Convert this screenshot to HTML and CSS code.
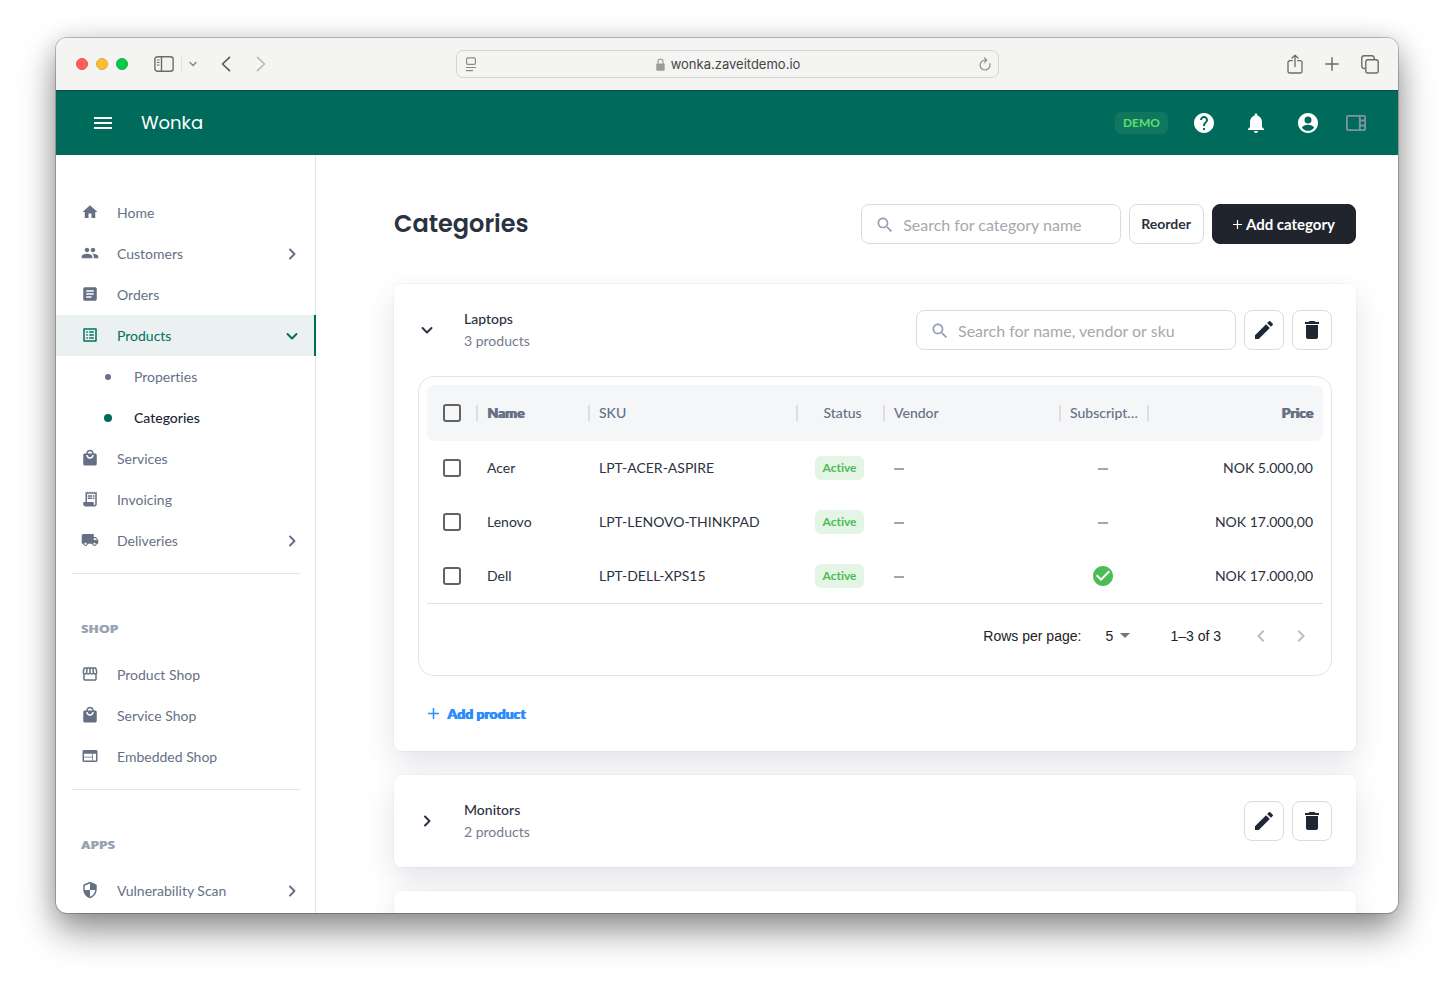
FILE: index.html
```html
<!DOCTYPE html>
<html lang="en">
<head>
<meta charset="utf-8">
<meta name="viewport" content="width=device-width, initial-scale=1">
<title>Wonka – Categories</title>
<link rel="stylesheet" href="styles.css">
</head>
<body>
<svg class="sprite" aria-hidden="true">
  <symbol id="i-mall" viewBox="0 0 24 24"><path d="M19 6h-2c0-2.760-2.240-5-5-5S7 3.240 7 6H5c-1.100 0-1.990.9-1.990 2L3 20c0 1.100.9 2 2 2h14c1.100 0 2-.9 2-2V8c0-1.100-.9-2-2-2zm-7-3c1.660 0 3 1.340 3 3H9c0-1.660 1.340-3 3-3zm0 10c-2.760 0-5-2.240-5-5h2c0 1.660 1.340 3 3 3s3-1.340 3-3h2c0 2.760-2.240 5-5 5z"/></symbol>
  <symbol id="i-right" viewBox="0 0 18 18"><path d="M7 4.500l4.500 4.500-4.500 4.500" fill="none" stroke="currentColor" stroke-width="2" stroke-linecap="round" stroke-linejoin="round"/></symbol>
  <symbol id="i-down" viewBox="0 0 18 18"><path d="M4.500 7l4.500 4.500 4.500-4.500" fill="none" stroke="currentColor" stroke-width="2" stroke-linecap="round" stroke-linejoin="round"/></symbol>
  <symbol id="i-search" viewBox="0 0 24 24"><path d="M15.500 14h-.79l-.28-.27C15.410 12.590 16 11.110 16 9.500 16 5.910 13.090 3 9.500 3S3 5.910 3 9.500 5.910 16 9.500 16c1.610 0 3.090-.59 4.230-1.570l.27.28v.79l5 4.990L20.490 19l-4.990-5zm-6 0C7.010 14 5 11.990 5 9.500S7.010 5 9.500 5 14 7.010 14 9.500 11.990 14 9.500 14z"/></symbol>
  <symbol id="i-edit" viewBox="0 0 24 24"><path d="M3 17.250V21h3.750L17.810 9.940l-3.750-3.750L3 17.250zM20.710 7.040c.39-.39.39-1.020 0-1.410l-2.340-2.340a.996.996 0 0 0-1.410 0l-1.830 1.830 3.750 3.750 1.830-1.830z"/></symbol>
  <symbol id="i-trash" viewBox="0 0 24 24"><path d="M6 19c0 1.100.9 2 2 2h8c1.100 0 2-.9 2-2V7H6v12zM19 4h-3.500l-1-1h-5l-1 1H5v2h14V4z"/></symbol>
</svg>

<div class="window">
  <header class="toolbar">
    <div class="toolbar-left">
      <span class="lights"><i class="light red"></i><i class="light amber"></i><i class="light green"></i></span>
      <button class="chrome-btn panel-btn" aria-label="Sidebar"><svg width="20" height="16" viewBox="0 0 20 16" fill="none" stroke="#6b6b69" stroke-width="1.400"><rect x=".9" y=".7" width="18.200" height="14.600" rx="2.500"/><path d="M7.500 1v14"/><path d="M3 4h2.500M3 6.500h2.500M3 9h2.500" stroke-width="1"/></svg></button>
      <span class="bar"></span>
      <button class="chrome-btn menu-btn" aria-label="Sidebar options"><svg width="8" height="6" viewBox="0 0 8 6" fill="none" stroke="#8a8a88" stroke-width="1.500" stroke-linecap="round"><path d="M1 1.500l3 3 3-3"/></svg></button>
      <button class="chrome-btn back-btn" aria-label="Back"><svg width="10" height="16" viewBox="0 0 10 16" fill="none" stroke="#5b5b59" stroke-width="1.700" stroke-linecap="round" stroke-linejoin="round"><path d="M8.500 1.300L1.500 8l7 6.700"/></svg></button>
      <button class="chrome-btn" aria-label="Forward"><svg width="10" height="16" viewBox="0 0 10 16" fill="none" stroke="#b9b9b7" stroke-width="1.700" stroke-linecap="round" stroke-linejoin="round"><path d="M1.500 1.300l7 6.700-7 6.700"/></svg></button>
    </div>
    <div class="address">
      <svg width="12" height="15" viewBox="0 0 12 15" fill="none" stroke="#8a8a88" stroke-width="1.200"><rect x="1.600" y=".8" width="8.800" height="6.600" rx="1.500"/><path d="M1 10.500h10M1 13.700h7"/></svg>
      <span class="host"><svg width="9" height="13" viewBox="0 0 9 13"><path d="M2 6V3.600a2.500 2.500 0 0 1 5 0V6" fill="none" stroke="#a5a5a3" stroke-width="1.300"/><rect x=".3" y="5.400" width="8.400" height="7.400" rx="1.200" fill="#9b9b99"/></svg>wonka.zaveitdemo.io</span>
      <button class="chrome-btn" aria-label="Reload"><svg width="12" height="15" viewBox="0 0 12 15" fill="none" stroke="#8f8f8d" stroke-width="1.200" stroke-linecap="round" stroke-linejoin="round"><path d="M10.700 6.700a4.900 4.900 0 1 1-4.700-3.500h1.500M5.500.8l2.300 2.400-2.300 2.400"/></svg></button>
    </div>
    <div class="toolbar-right">
      <button class="chrome-btn" aria-label="Share"><svg width="16" height="20" viewBox="0 0 16 20" fill="none" stroke="#6b6b69" stroke-width="1.300" stroke-linecap="round" stroke-linejoin="round"><path d="M5.300 6.700H2.700a1.700 1.700 0 0 0-1.700 1.700v8.900A1.700 1.700 0 0 0 2.700 19h10.600a1.700 1.700 0 0 0 1.700-1.700V8.400a1.700 1.700 0 0 0-1.700-1.700h-2.600M8 12.500V1.200M5 4l3-2.900L11 4"/></svg></button>
      <button class="chrome-btn" aria-label="New tab"><svg width="14" height="14" viewBox="0 0 14 14" fill="none" stroke="#6b6b69" stroke-width="1.500" stroke-linecap="round"><path d="M7 .8v12.400M.8 7h12.400"/></svg></button>
      <button class="chrome-btn" aria-label="Tabs"><svg width="18" height="19" viewBox="0 0 18 19" fill="none" stroke="#6b6b69" stroke-width="1.400"><path d="M4.500 13.500H3a2.200 2.200 0 0 1-2.200-2.200V3A2.200 2.200 0 0 1 3 .8h8A2.200 2.200 0 0 1 13.200 3v1.500"/><rect x="4.800" y="4.800" width="12.400" height="13.200" rx="2.200"/></svg></button>
    </div>
  </header>

  <div class="appbar">
    <button class="icon-btn" aria-label="Menu"><svg width="24" height="24" viewBox="0 0 24 24"><path d="M3 18h18v-2H3v2zm0-5h18v-2H3v2zm0-7v2h18V6H3z"/></svg></button>
    <a class="brand" href="#">Wonka</a>
    <span class="demo">DEMO</span>
    <div class="app-actions">
      <button class="icon-btn" aria-label="Help"><svg width="24" height="24" viewBox="0 0 24 24"><path d="M12 2C6.480 2 2 6.480 2 12s4.480 10 10 10 10-4.480 10-10S17.520 2 12 2zm1 17h-2v-2h2v2zm2.070-7.750l-.9.920C13.450 12.900 13 13.500 13 15h-2v-.5c0-1.100.45-2.100 1.170-2.830l1.240-1.260c.37-.36.59-.86.59-1.410 0-1.100-.9-2-2-2s-2 .9-2 2H8c0-2.210 1.790-4 4-4s4 1.790 4 4c0 .88-.36 1.680-.93 2.250z"/></svg></button>
      <button class="icon-btn" aria-label="Notifications"><svg width="24" height="24" viewBox="0 0 24 24"><path d="M12 22c1.100 0 2-.9 2-2h-4c0 1.100.89 2 2 2zm6-6v-5c0-3.070-1.640-5.640-4.500-6.320V4c0-.83-.67-1.500-1.500-1.500s-1.500.67-1.500 1.500v.68C7.630 5.360 6 7.920 6 11v5l-2 2v1h16v-1l-2-2z"/></svg></button>
      <button class="icon-btn" aria-label="Account"><svg width="24" height="24" viewBox="0 0 24 24"><path d="M12 2C6.480 2 2 6.480 2 12s4.480 10 10 10 10-4.480 10-10S17.520 2 12 2zm0 3.500a3.500 3.500 0 1 1 0 7 3.500 3.500 0 0 1 0-7zm0 14.300c-2.500 0-4.700-1.200-6-3.100.1-1.900 4-3 6-3s5.900 1.100 6 3c-1.300 1.900-3.500 3.100-6 3.100z"/></svg></button>
      <button class="icon-btn narrow" aria-label="Side panel"><svg width="20" height="16" viewBox="0 0 20 16" fill="none" stroke="#7f93a8" stroke-width="1.800"><rect x=".9" y=".9" width="18.200" height="14.200" rx="1"/><path d="M13.800 1v14M14 5.500h5M14 10.500h5"/></svg></button>
    </div>
  </div>

  <div class="body">
    <nav class="sidebar" aria-label="Main">
      <a class="item" href="#"><svg class="ico" viewBox="0 0 24 24"><path d="M10 20v-6h4v6h5v-8h3L12 3 2 12h3v8z"/></svg><span>Home</span></a>
      <a class="item" href="#"><svg class="ico" viewBox="0 0 24 24"><path d="M16 11c1.660 0 2.990-1.340 2.990-3S17.660 5 16 5c-1.660 0-3 1.340-3 3s1.340 3 3 3zm-8 0c1.660 0 2.990-1.340 2.990-3S9.660 5 8 5C6.340 5 5 6.340 5 8s1.340 3 3 3zm0 2c-2.330 0-7 1.170-7 3.500V19h14v-2.500c0-2.330-4.670-3.500-7-3.500zm8 0c-.29 0-.62.020-.97.050 1.160.84 1.970 1.970 1.970 3.450V19h6v-2.500c0-2.330-4.670-3.500-7-3.500z"/></svg><span>Customers</span><svg class="chev"><use href="#i-right"/></svg></a>
      <a class="item" href="#"><svg class="ico" viewBox="0 0 24 24"><path d="M19 3H5c-1.100 0-2 .9-2 2v14c0 1.100.9 2 2 2h14c1.100 0 2-.9 2-2V5c0-1.100-.9-2-2-2zm-5 14H7v-2h7v2zm3-4H7v-2h10v2zm0-4H7V7h10v2z"/></svg><span>Orders</span></a>
      <a class="item active" href="#"><svg class="ico" viewBox="0 0 24 24"><path d="M19 5v14H5V5h14m1.100-2H3.900c-.5 0-.9.4-.9.9v16.200c0 .4.4.9.9.9h16.200c.4 0 .9-.5.9-.9V3.900c0-.5-.5-.9-.9-.9zM11 7h6v2h-6V7zm0 4h6v2h-6v-2zm0 4h6v2h-6zM7 7h2v2H7zm0 4h2v2H7zm0 4h2v2H7z"/></svg><span>Products</span><svg class="chev"><use href="#i-down"/></svg></a>
      <a class="item sub" href="#"><i class="dot"></i><span>Properties</span></a>
      <a class="item sub current" href="#" aria-current="page"><i class="dot"></i><span>Categories</span></a>
      <a class="item" href="#"><svg class="ico"><use href="#i-mall"/></svg><span>Services</span></a>
      <a class="item" href="#"><svg class="ico" viewBox="0 0 24 24"><path d="M19.500 3.500L18 2l-1.500 1.500L15 2l-1.500 1.500L12 2l-1.500 1.500L9 2 7.500 3.500 6 2v14H3v3c0 1.660 1.340 3 3 3h12c1.660 0 3-1.340 3-3V2l-1.500 1.500zM19 19c0 .55-.45 1-1 1s-1-.45-1-1v-3H8V5h11v14zM9 7h6v2H9zM16 7h2v2h-2zM9 10h6v2H9zM16 10h2v2h-2z"/></svg><span>Invoicing</span></a>
      <a class="item" href="#"><svg class="ico" viewBox="0 0 24 24"><path d="M20 8h-3V4H3c-1.100 0-2 .9-2 2v11h2c0 1.660 1.340 3 3 3s3-1.340 3-3h6c0 1.660 1.340 3 3 3s3-1.340 3-3h2v-5l-3-4zM6 18.500c-.83 0-1.500-.67-1.500-1.500s.67-1.500 1.500-1.500 1.500.67 1.500 1.500-.67 1.500-1.500 1.500zm13.500-9l1.960 2.500H17V9.500h2.500zm-1.500 9c-.83 0-1.500-.67-1.500-1.500s.67-1.500 1.500-1.500 1.500.67 1.500 1.500-.67 1.500-1.500 1.500z"/></svg><span>Deliveries</span><svg class="chev"><use href="#i-right"/></svg></a>
      <h2 class="group">SHOP</h2>
      <a class="item" href="#"><svg class="ico" viewBox="0 0 24 24"><path d="M21.900 8.890l-1.050-4.370c-.22-.9-1-1.520-1.910-1.520H5.050c-.9 0-1.690.63-1.900 1.520L2.100 8.890c-.24 1.020-.02 2.060.62 2.880.08.110.19.190.28.290V19c0 1.100.9 2 2 2h14c1.100 0 2-.9 2-2v-6.940c.09-.09.2-.18.28-.28.64-.82.87-1.870.62-2.890zm-2.990-3.900l1.050 4.370c.1.420.01.84-.25 1.170-.14.180-.44.470-.94.470-.61 0-1.140-.49-1.210-1.140L16.980 5l1.930-.01zM13 5h1.960l.54 4.520c.05.390-.07.780-.33 1.070-.22.260-.54.410-.95.410-.67 0-1.220-.59-1.220-1.310V5zM8.490 9.520L9.040 5H11v4.690c0 .72-.55 1.310-1.290 1.310-.34 0-.65-.15-.89-.41-.25-.29-.37-.68-.33-1.070zm-4.450-.16L5.050 5h1.970l-.58 4.860c-.08.650-.6 1.140-1.210 1.140-.49 0-.8-.29-.93-.47-.27-.32-.36-.75-.26-1.170zM5 19v-6.030c.08.010.15.030.23.030.87 0 1.660-.36 2.240-.95.6.6 1.400.95 2.310.95.870 0 1.650-.36 2.230-.93.590.57 1.390.93 2.290.93.840 0 1.640-.35 2.240-.95.580.59 1.370.95 2.240.95.080 0 .15-.02.23-.03V19H5z"/></svg><span>Product Shop</span></a>
      <a class="item" href="#"><svg class="ico"><use href="#i-mall"/></svg><span>Service Shop</span></a>
      <a class="item" href="#"><svg class="ico" viewBox="0 0 24 24"><path d="M20 4H4c-1.100 0-1.990.9-1.990 2L2 18c0 1.100.9 2 2 2h16c1.100 0 2-.9 2-2V6c0-1.100-.9-2-2-2zm-5 14H4v-4h11v4zm0-5H4V9h11v4zm5 5h-4V9h4v9z"/></svg><span>Embedded Shop</span></a>
      <h2 class="group">APPS</h2>
      <a class="item" href="#"><svg class="ico" viewBox="0 0 24 24"><path d="M12 1L4.200 4.400C3.500 4.700 3 5.500 3 6.200V11c0 5.550 3.840 10.740 9 12 5.160-1.260 9-6.450 9-12V6.200c0-.7-.5-1.500-1.200-1.800L12 1zm0 10.990h7c-.53 4.120-3.280 7.790-7 8.940V12H5V6.300l7-3.110v8.800z"/></svg><span>Vulnerability Scan</span><svg class="chev"><use href="#i-right"/></svg></a>
    </nav>

    <main class="main">
      <div class="page-head">
        <h1>Categories</h1>
        <label class="search"><svg><use href="#i-search"/></svg><input type="text" aria-label="Search categories" placeholder="Search for category name"></label>
        <button class="btn">Reorder</button>
        <button class="btn dark"><svg width="9" height="9" viewBox="0 0 9 9" stroke="#fff" stroke-width="1.200"><path d="M4.500 0v9M0 4.500h9"/></svg>Add category</button>
      </div>

      <section class="card">
        <div class="card-head">
          <button class="toggle" aria-label="Collapse Laptops" aria-expanded="true"><svg><use href="#i-down"/></svg></button>
          <div class="titles"><h3>Laptops</h3><p>3 products</p></div>
          <label class="search wide"><svg><use href="#i-search"/></svg><input type="text" aria-label="Search products" placeholder="Search for name, vendor or sku"></label>
          <button class="square" aria-label="Edit"><svg><use href="#i-edit"/></svg></button>
          <button class="square" aria-label="Delete"><svg><use href="#i-trash"/></svg></button>
        </div>

        <div class="grid">
          <table>
            <colgroup><col class="c-check"><col class="c-name"><col class="c-sku"><col class="c-status"><col class="c-vendor"><col class="c-sub"><col></colgroup>
            <thead>
              <tr><th class="check"><input type="checkbox" aria-label="Select all"></th><th class="sep strong">Name</th><th class="sep">SKU</th><th class="sep center">Status</th><th class="sep">Vendor</th><th class="sep">Subscription</th><th class="sep strong right">Price</th></tr>
            </thead>
            <tbody>
              <tr><td class="check"><input type="checkbox" aria-label="Select Acer"></td><td>Acer</td><td>LPT-ACER-ASPIRE</td><td class="mid"><span class="badge">Active</span></td><td><i class="dash"></i></td><td class="mid"><i class="dash"></i></td><td class="right">NOK 5.000,00</td></tr>
              <tr><td class="check"><input type="checkbox" aria-label="Select Lenovo"></td><td>Lenovo</td><td>LPT-LENOVO-THINKPAD</td><td class="mid"><span class="badge">Active</span></td><td><i class="dash"></i></td><td class="mid"><i class="dash"></i></td><td class="right">NOK 17.000,00</td></tr>
              <tr><td class="check"><input type="checkbox" aria-label="Select Dell"></td><td>Dell</td><td>LPT-DELL-XPS15</td><td class="mid"><span class="badge">Active</span></td><td><i class="dash"></i></td><td class="mid"><svg class="tick" viewBox="0 0 24 24"><path d="M12 2C6.480 2 2 6.480 2 12s4.480 10 10 10 10-4.480 10-10S17.520 2 12 2zm-2 15l-5-5 1.410-1.410L10 14.170l7.590-7.590L19 8l-9 9z"/></svg></td><td class="right">NOK 17.000,00</td></tr>
            </tbody>
          </table>
          <div class="pager">
            <label for="rows">Rows per page:</label>
            <span class="rows"><select id="rows"><option>5</option><option>10</option><option>25</option></select><svg width="10" height="5" viewBox="0 0 10 5"><path d="M0 0h10L5 5z"/></svg></span>
            <span class="range">1–3 of 3</span>
            <button aria-label="Previous page"><svg viewBox="0 0 24 24"><path d="M15.410 7.410L14 6l-6 6 6 6 1.410-1.410L10.830 12z"/></svg></button>
            <button aria-label="Next page"><svg viewBox="0 0 24 24"><path d="M10 6L8.590 7.410 13.170 12l-4.580 4.590L10 18l6-6z"/></svg></button>
          </div>
        </div>

        <button class="add"><svg width="11" height="11" viewBox="0 0 11 11" stroke="#2a8bff" stroke-width="1.500"><path d="M5.500 0v11M0 5.500h11"/></svg>Add product</button>
      </section>

      <section class="card">
        <div class="card-head">
          <button class="toggle" aria-label="Expand Monitors" aria-expanded="false"><svg><use href="#i-right"/></svg></button>
          <div class="titles"><h3>Monitors</h3><p>2 products</p></div>
          <button class="square" aria-label="Edit"><svg><use href="#i-edit"/></svg></button>
          <button class="square" aria-label="Delete"><svg><use href="#i-trash"/></svg></button>
        </div>
      </section>

      <section class="card next"></section>
    </main>
  </div>
</div>
</body>
</html>
```

FILE: styles.css
```css
* { box-sizing: border-box; }
body {
  margin: 0;
  height: 100vh;
  padding: 38px 56px 74px;
  background: #fff;
  font: 14px/22px Lato, "Open Sans", sans-serif;
  font-variant-ligatures: none;
  color: #2b3240;
}
h1, h2, h3, p { margin: 0; }
a { color: inherit; text-decoration: none; }
button {
  font: inherit;
  color: inherit;
  padding: 0;
  border: 0;
  background: none;
}
svg { display: block; flex: none; }
svg:not([fill]) { fill: currentColor; }
.sprite { display: none; }

.window {
  height: 100%;
  display: flex;
  flex-direction: column;
  overflow: hidden;
  border-radius: 11px;
  background: #fff;
  box-shadow: 0 0 0 1px rgba(0, 0, 0, .22), 0 18px 36px rgba(0, 0, 0, .42), 0 2px 24px rgba(0, 0, 0, .14);
}

/* Browser toolbar */
.toolbar {
  flex: none;
  height: 53px;
  display: grid;
  grid-template-columns: 1fr minmax(0, 543px) 1fr;
  align-items: center;
  background: #f4f4f2;
  border-bottom: 1px solid #0a4b41;
}
.toolbar-left, .toolbar-right { display: flex; align-items: center; }
.toolbar-left { padding-left: 20px; }
.toolbar-right { justify-content: flex-end; gap: 22px; padding-right: 19px; }
.lights { display: flex; gap: 8px; }
.light { width: 12px; height: 12px; border-radius: 50%; border: 1px solid; }
.red { background: #ff5f57; border-color: #e9544d; }
.amber { background: #febc2e; border-color: #e3a93a; }
.green { background: #06c945; border-color: #0bb441; }
.panel-btn { margin-left: 26px; }
.bar { width: 1px; height: 18px; margin: 0 7px; background: #e2e2e0; }
.back-btn { margin: 0 25px 0 24px; }
.address {
  display: flex;
  align-items: center;
  justify-content: space-between;
  height: 28px;
  padding: 0 6px 0 8px;
  border: 1px solid #d3d3d1;
  border-radius: 7px;
}
.host {
  display: flex;
  align-items: center;
  gap: 6px;
  font: 13px/16px Inter, Roboto, sans-serif;
  color: #444;
}

/* Application bar */
.appbar {
  flex: none;
  display: flex;
  align-items: center;
  height: 64px;
  padding: 0 32px 0 33px;
  background: #006a5b;
  color: #fff;
}
.icon-btn { width: 28px; display: flex; justify-content: center; }
.icon-btn.narrow { width: 20px; }
.brand { margin-left: 24px; font: 18px/28px Poppins, Inter, sans-serif; }
.demo {
  margin: 0 22px 0 auto;
  padding: 0 8px;
  border-radius: 6px;
  background: #117660;
  color: #5be070;
  font-size: 12px;
  font-weight: 700;
}
.app-actions { display: flex; align-items: center; gap: 24px; }

/* Sidebar */
.body { flex: 1; min-height: 0; display: flex; overflow: hidden; }
.sidebar {
  flex: none;
  width: 260px;
  padding-top: 37px;
  border-right: 1px solid #e4e6ea;
  color: #667085;
}
.item {
  display: flex;
  align-items: center;
  gap: 18px;
  height: 41px;
  padding: 0 14px 0 25px;
}
.ico { width: 18px; height: 18px; margin-bottom: 2px; }
.chev { width: 18px; height: 18px; margin-left: auto; }
.active {
  margin-right: -1px;
  padding-right: 13px;
  border-right: 2px solid #006a5b;
  background: #ebf1f0;
  color: #00705f;
}
.sub { padding-left: 44px; }
.dot { width: 16px; display: flex; justify-content: center; }
.dot::before { content: ""; width: 6px; height: 6px; border-radius: 50%; background: #667085; }
.current { color: #212833; font-weight: 500; }
.current .dot::before { width: 8px; height: 8px; background: #006a5b; }
.group {
  margin: 12px 15px 0 16px;
  padding: 44px 9px 14px;
  border-top: 1px solid #e2e4e7;
  color: #98a2b3;
  font-size: 12px;
  font-weight: 900;
  letter-spacing: 1px;
  text-shadow: 1px 0 currentColor;
}

/* Content */
.main {
  flex: 1;
  min-width: 0;
  overflow: hidden;
  display: flex;
  flex-direction: column;
  gap: 24px;
  padding: 49px 42px 0 78px;
}
.page-head { flex: none; display: flex; align-items: center; gap: 8px; margin-bottom: 16px; }
h1 { margin-right: auto; font: 600 24px/40px Poppins, Inter, sans-serif; }
.search {
  display: flex;
  align-items: center;
  gap: 8px;
  width: 260px;
  height: 40px;
  padding: 2px 12px 0 13px;
  border: 1px solid #d9dbe3;
  border-radius: 8px;
  background: #fff;
}
.search.wide { width: 320px; }
.search svg { width: 20px; height: 20px; color: #94a0b5; }
.search input {
  flex: 1;
  min-width: 0;
  padding: 0;
  border: 0;
  outline: 0;
  background: none;
  font: 16px/24px Lato, sans-serif;
}
.search input::placeholder { color: #a6a8ac; opacity: 1; }
.btn {
  height: 40px;
  padding: 0 12px 0 11px;
  border: 1px solid #d9dbe3;
  border-radius: 8px;
  background: #fff;
  font-weight: 700;
}
.dark {
  display: flex;
  align-items: center;
  gap: 4px;
  padding: 0 20px;
  border-color: #20242d;
  background: #20242d;
  color: #fff;
  font-size: 15px;
}

.card {
  flex: none;
  display: flex;
  flex-direction: column;
  gap: 24px;
  padding: 24px;
  border-radius: 8px;
  background: rgba(255, 255, 255, .85);
  box-shadow: 0 0 0 1px rgba(30, 41, 80, .03), 0 12px 30px rgba(50, 60, 90, .14);
}
.card.next { height: 120px; }
.card-head { display: flex; align-items: center; gap: 8px; }
.toggle svg { width: 18px; height: 18px; }
.titles { margin: 0 auto 0 20px; }
.titles p { color: #737b8e; }
h3 { font-size: 14px; line-height: 22px; font-weight: 500; }
.square {
  display: grid;
  place-items: center;
  width: 40px;
  height: 40px;
  border: 1px solid #d9dbe3;
  border-radius: 8px;
  background: #fff;
  color: #1e2733;
}
.square svg { width: 24px; height: 24px; }

/* Product table */
.grid { padding: 8px; border: 1px solid #e2e4e8; border-radius: 16px; background: #fff; }
table { width: 100%; table-layout: fixed; border-collapse: separate; border-spacing: 0; }
.c-check { width: 49px; }
.c-name { width: 112px; }
.c-sku { width: 208px; }
.c-status { width: 87px; }
.c-vendor { width: 176px; }
.c-sub { width: 88px; }
th, td { padding: 0 10px 0 11px; text-align: left; white-space: nowrap; }
th {
  height: 56px;
  padding-right: 7px;
  overflow: hidden;
  text-overflow: ellipsis;
  background-color: #f4f6f8;
  color: #667085;
  font-weight: 500;
}
th:first-child { border-radius: 8px 0 0 8px; }
th:last-child { border-radius: 0 8px 8px 0; }
.sep {
  background-image: linear-gradient(#dcdee1, #dcdee1);
  background-size: 2px 16px;
  background-position: left center;
  background-repeat: no-repeat;
}
td { height: 54px; }
tbody tr:last-child td { border-bottom: 1px solid #dfe0e3; height: 55px; }
.strong { font-weight: 900; text-shadow: 1px 0 currentColor; }
.center { padding-right: 5px; text-align: center; }
.mid { padding: 0; text-align: center; }
.right { padding-right: 10px; text-align: right; }
.check { padding: 0 0 0 16px; }
.check input {
  appearance: none;
  display: block;
  width: 18px;
  height: 18px;
  margin: 0;
  border: 2px solid #636363;
  border-radius: 3px;
  background: #fff;
}
th.check input { background: transparent; }
.badge {
  display: inline-block;
  padding: 1px 7px;
  border-radius: 6px;
  background: #e4f4e5;
  color: #4cbc55;
  font-size: 12px;
  font-weight: 700;
}
.dash { display: inline-block; width: 10px; height: 2px; vertical-align: middle; background: #a3a5ab; }
.tick { width: 24px; height: 24px; margin: 0 auto; color: #4cbc55; }
.pager {
  display: flex;
  align-items: center;
  justify-content: flex-end;
  height: 63px;
  padding-right: 2px;
  font-family: "Liberation Sans", Arial, sans-serif;
  color: #222;
}
.rows { display: flex; align-items: center; margin: 0 40px 0 24px; }
.rows svg { margin-left: -10px; color: #757575; pointer-events: none; }
.rows select {
  appearance: none;
  width: 25px;
  padding: 0;
  border: 0;
  background: none;
  font: inherit;
  color: inherit;
}
.range { margin-right: 20px; }
.pager button { width: 40px; display: flex; justify-content: center; color: #bdbdbd; }
.pager button svg { width: 24px; height: 24px; }

.add {
  display: flex;
  align-items: center;
  align-self: flex-start;
  gap: 8px;
  height: 27px;
  padding-left: 10px;
  color: #2a8bff;
  font-weight: 900;
  text-shadow: 1px 0 currentColor;
}
```
